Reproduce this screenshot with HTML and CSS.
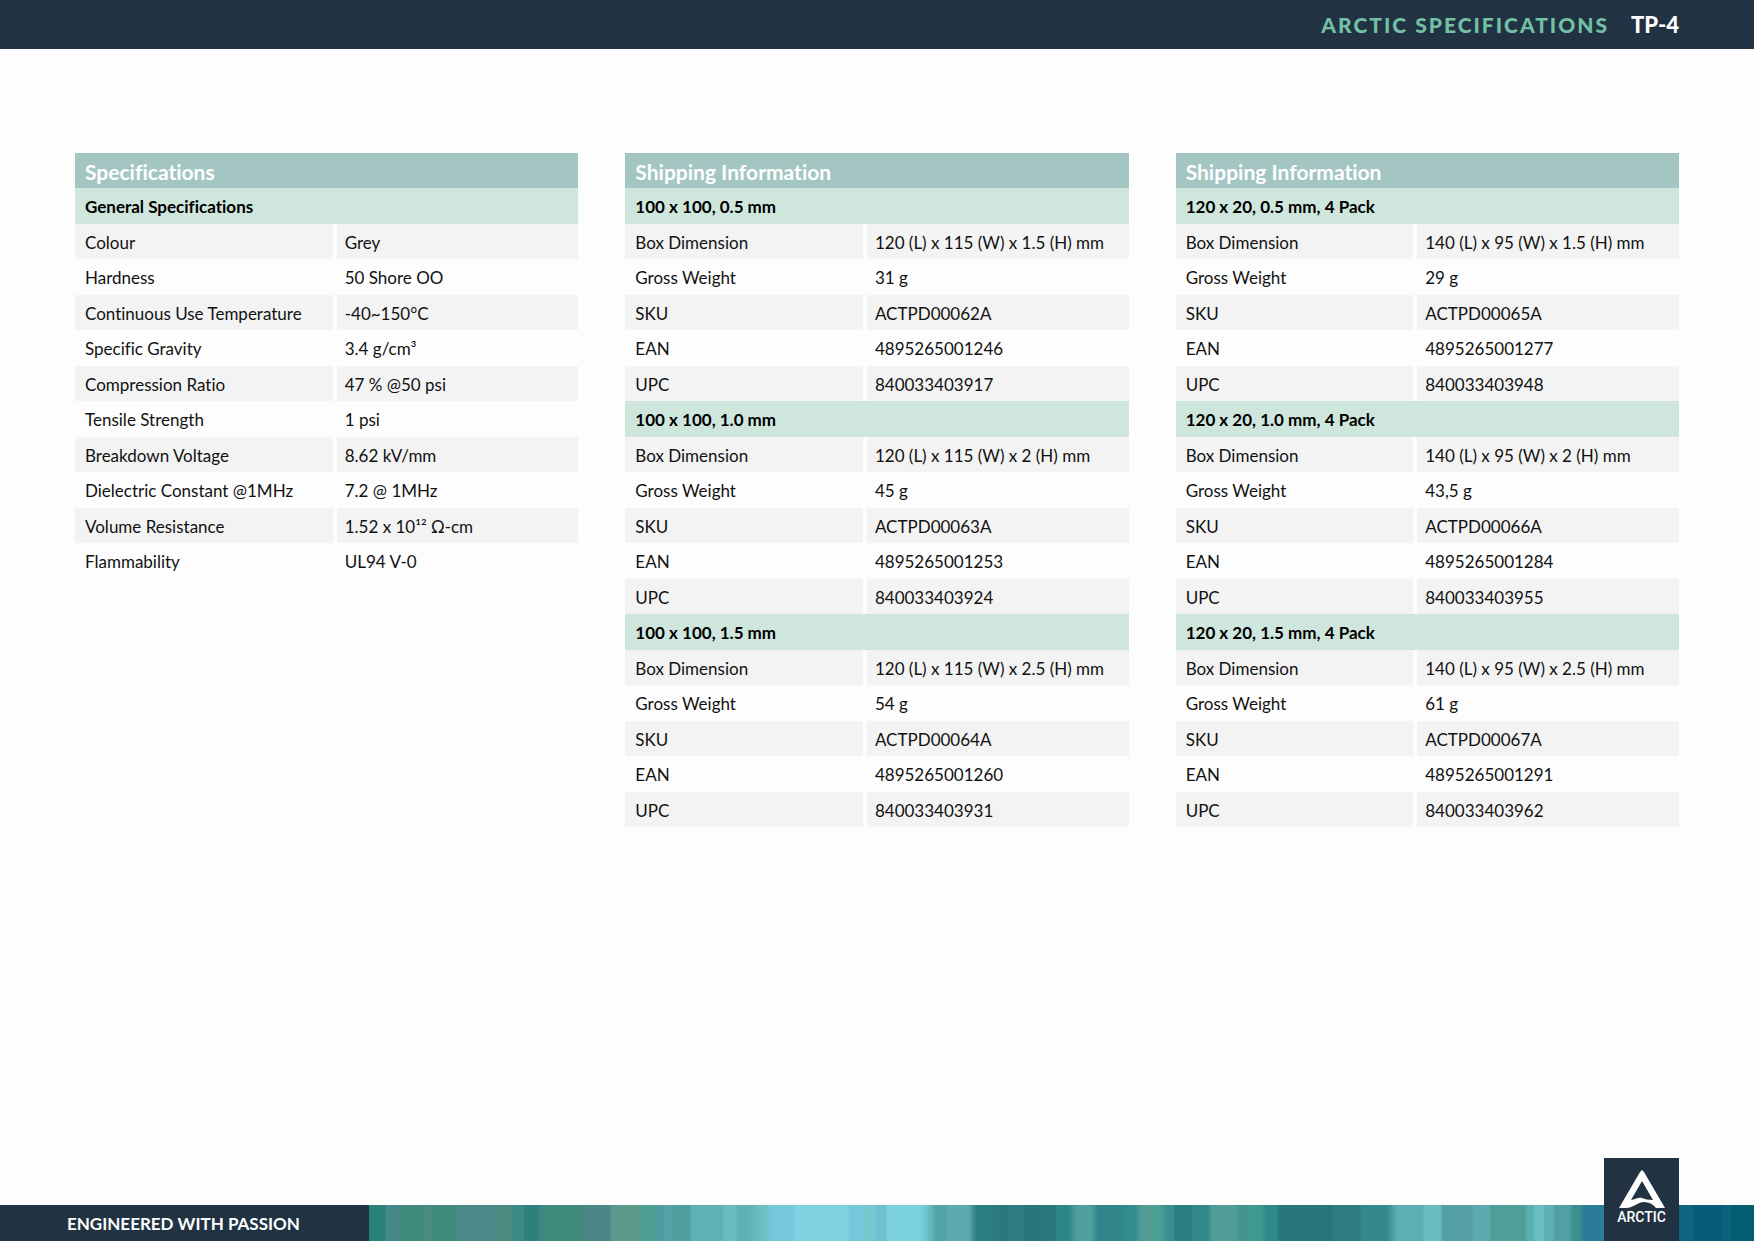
FILE: index.html
```html
<!DOCTYPE html>
<html lang="en">
<head>
    <meta charset="UTF-8">
    <meta name="viewport" content="width=device-width, initial-scale=1.0">
    <title>ARCTIC Specifications TP-4</title>
    <link rel="stylesheet" href="styles.css">
</head>
<body>
    <header class="top-bar">
        <span class="top-title">ARCTIC SPECIFICATIONS</span>
        <h1 class="product">TP-4</h1>
    </header>
    <main class="columns">
        <table class="specs">
            <colgroup><col class="label"><col></colgroup>
            <thead>
                <tr><th colspan="2">Specifications</th></tr>
            </thead>
            <tbody>
                <tr class="group"><th colspan="2">General Specifications</th></tr>
                <tr class="grey"><th>Colour</th><td>Grey</td></tr>
                <tr><th>Hardness</th><td>50 Shore OO</td></tr>
                <tr class="grey"><th>Continuous Use Temperature</th><td>-40~150°C</td></tr>
                <tr><th>Specific Gravity</th><td>3.4 g/cm³</td></tr>
                <tr class="grey"><th>Compression Ratio</th><td>47 % @50 psi</td></tr>
                <tr><th>Tensile Strength</th><td>1 psi</td></tr>
                <tr class="grey"><th>Breakdown Voltage</th><td>8.62 kV/mm</td></tr>
                <tr><th>Dielectric Constant @1MHz</th><td>7.2 @ 1MHz</td></tr>
                <tr class="grey"><th>Volume Resistance</th><td>1.52 x 10¹² Ω-cm</td></tr>
                <tr><th>Flammability</th><td>UL94 V-0</td></tr>
            </tbody>
        </table>
        <table class="shipping">
            <colgroup><col class="label"><col></colgroup>
            <thead>
                <tr><th colspan="2">Shipping Information</th></tr>
            </thead>
            <tbody>
                <tr class="group"><th colspan="2">100 x 100, 0.5 mm</th></tr>
                <tr class="grey"><th>Box Dimension</th><td>120 (L) x 115 (W) x 1.5 (H) mm</td></tr>
                <tr><th>Gross Weight</th><td>31 g</td></tr>
                <tr class="grey"><th>SKU</th><td>ACTPD00062A</td></tr>
                <tr><th>EAN</th><td>4895265001246</td></tr>
                <tr class="grey"><th>UPC</th><td>840033403917</td></tr>
            </tbody>
            <tbody>
                <tr class="group"><th colspan="2">100 x 100, 1.0 mm</th></tr>
                <tr class="grey"><th>Box Dimension</th><td>120 (L) x 115 (W) x 2 (H) mm</td></tr>
                <tr><th>Gross Weight</th><td>45 g</td></tr>
                <tr class="grey"><th>SKU</th><td>ACTPD00063A</td></tr>
                <tr><th>EAN</th><td>4895265001253</td></tr>
                <tr class="grey"><th>UPC</th><td>840033403924</td></tr>
            </tbody>
            <tbody>
                <tr class="group"><th colspan="2">100 x 100, 1.5 mm</th></tr>
                <tr class="grey"><th>Box Dimension</th><td>120 (L) x 115 (W) x 2.5 (H) mm</td></tr>
                <tr><th>Gross Weight</th><td>54 g</td></tr>
                <tr class="grey"><th>SKU</th><td>ACTPD00064A</td></tr>
                <tr><th>EAN</th><td>4895265001260</td></tr>
                <tr class="grey"><th>UPC</th><td>840033403931</td></tr>
            </tbody>
        </table>
        <table class="shipping">
            <colgroup><col class="label"><col></colgroup>
            <thead>
                <tr><th colspan="2">Shipping Information</th></tr>
            </thead>
            <tbody>
                <tr class="group"><th colspan="2">120 x 20, 0.5 mm, 4 Pack</th></tr>
                <tr class="grey"><th>Box Dimension</th><td>140 (L) x 95 (W) x 1.5 (H) mm</td></tr>
                <tr><th>Gross Weight</th><td>29 g</td></tr>
                <tr class="grey"><th>SKU</th><td>ACTPD00065A</td></tr>
                <tr><th>EAN</th><td>4895265001277</td></tr>
                <tr class="grey"><th>UPC</th><td>840033403948</td></tr>
            </tbody>
            <tbody>
                <tr class="group"><th colspan="2">120 x 20, 1.0 mm, 4 Pack</th></tr>
                <tr class="grey"><th>Box Dimension</th><td>140 (L) x 95 (W) x 2 (H) mm</td></tr>
                <tr><th>Gross Weight</th><td>43,5 g</td></tr>
                <tr class="grey"><th>SKU</th><td>ACTPD00066A</td></tr>
                <tr><th>EAN</th><td>4895265001284</td></tr>
                <tr class="grey"><th>UPC</th><td>840033403955</td></tr>
            </tbody>
            <tbody>
                <tr class="group"><th colspan="2">120 x 20, 1.5 mm, 4 Pack</th></tr>
                <tr class="grey"><th>Box Dimension</th><td>140 (L) x 95 (W) x 2.5 (H) mm</td></tr>
                <tr><th>Gross Weight</th><td>61 g</td></tr>
                <tr class="grey"><th>SKU</th><td>ACTPD00067A</td></tr>
                <tr><th>EAN</th><td>4895265001291</td></tr>
                <tr class="grey"><th>UPC</th><td>840033403962</td></tr>
            </tbody>
        </table>
    </main>
    <footer class="bottom-bar">
        <div class="slogan">ENGINEERED WITH PASSION</div>
        <div class="stripes"></div>
        <div class="logo">
            <svg width="46" height="38" viewBox="0 0 46 38" aria-hidden="true">
                <path fill="#fff" d="M23 0L25 2L46 38H37C34 34 30 32 25 32C18 32 15 38 7 38H0L21 2ZM23 11L12 30C16 30 19 27 23 28C26 29 29 30 34 30Z"/>
            </svg>
            <span>ARCTIC</span>
        </div>
    </footer>
</body>
</html>
```
FILE: styles.css
```css
* {
    box-sizing: border-box;
}
body {
    margin: 0;
    min-height: 100vh;
    display: flex;
    flex-direction: column;
    background: #fdfdfd;
    color: #111;
    font-family: Lato, "Liberation Sans", sans-serif;
    font-size: 17px;
    font-variant-ligatures: none;
}
.top-bar {
    display: flex;
    justify-content: flex-end;
    align-items: center;
    gap: 22px;
    height: 49px;
    padding: 0 75px;
    background: #213343;
    font-size: 21px;
    font-weight: 900;
}
.top-title {
    color: #73c0a5;
    letter-spacing: 2px;
}
.product {
    margin: 0;
    color: #fff;
    font-size: 22px;
    font-weight: 900;
}
.columns {
    flex: 1;
    display: grid;
    grid-template-columns: repeat(3, 1fr);
    align-items: start;
    gap: 47px;
    padding: 104px 75px 80px;
}
table {
    width: 100%;
    table-layout: fixed;
    border-collapse: separate;
    border-spacing: 0;
}
.specs .label {
    width: 52%;
}
.shipping .label {
    width: 48%;
}
th, td {
    height: 36px;
    padding: 2px 0 0 10px;
    text-align: left;
    font-weight: 400;
    line-height: 24px;
    white-space: nowrap;
}
td {
    padding-left: 8px;
}
thead th {
    height: 35px;
    background: #a4c6c3;
    color: #fff;
    font-size: 21px;
    font-weight: 700;
}
.group th {
    background: #cfe6dd;
    color: #000;
    font-weight: 700;
}
.grey th, .grey td {
    height: 35px;
    background: #f3f3f3;
}
/* White gap between label and value */
.grey th {
    border-right: 4px solid #fdfdfd;
}
.bottom-bar {
    position: relative;
    display: flex;
    height: 36px;
    background: #213343;
}
.slogan {
    width: 369px;
    padding-left: 67px;
    color: #fff;
    font-weight: 700;
    line-height: 37px;
}
.stripes {
    flex: 1;
    background: linear-gradient(90deg,
        #2a8278 0 16px, #46888a 17px 31px, #3f8a78 32px 54px, #4b8a7d 55px 62px,
        #3f8a78 63px 86px, #4a8987 87px 128px, #4a8a80 129px 143px, #3a8a85 145px 154px,
        #2f7f7a 156px 169px, #3f8688 170px 174px, #3e8b79 176px 210px, #4b8786 216px 241px,
        #5b9a8a 243px 271px, #4c9f95 272px 286px, #4e9ba0 287px 294px, #56a0aa 295px 303px,
        #4f9e9b 304px 320px, #5eb1b5 323px 353px, #69bcbf 355px 366px, #5fb2b4 370px 378px,
        #72c5c8 399px, #75c7da 401px 423px, #7fd3e0 427px 479px, #75c8da 480px 494px,
        #74c9cc 495px 506px, #6fc0d0 508px 516px, #7dd2e2 519px 551px, #5fb2b2 564px,
        #4fa5a5 567px 576px, #5fa9b0 578px 600px, #3f9094 604px, #2a8080 608px 623px,
        #2b787e 625px 639px, #307d85 640px 654px, #27747a 656px 671px, #2b787e 672px 686px,
        #2e8688 688px 700px, #50a09f 708px 722px, #2f8589 729px 751px, #338d90 760px 766px,
        #519b93 772px 783px, #489f93 785px 793px, #3a8f90 797px 804px, #2a8080 806px 823px,
        #33888d 824px 839px, #509d98 843px 868px, #45948d 870px 879px, #409a8f 881px 892px,
        #2f8a8c 897px 907px, #26757a 911px 961px, #2c7c80 964px 989px, #33898e 993px 1018px,
        #5cb0b5 1028px 1054px, #69bdc0 1055px 1072px, #54a0a6 1073px 1103px, #5faab2 1104px 1120px,
        #4f9e97 1122px 1155px, #5bb0b2 1159px 1164px, #69bfc3 1166px 1174px, #5fb0b5 1176px 1184px,
        #52a0a5 1186px 1200px, #3a9090 1204px 1211px, #2b7c98 1215px 1240px, #12637f 1300px 1324px,
        #065a7a 1325px 1353px, #0a6280 1354px 1361px, #045c72 1363px);
}
.logo {
    position: absolute;
    right: 75px;
    bottom: 0;
    width: 75px;
    height: 83px;
    padding-top: 12px;
    display: flex;
    flex-direction: column;
    align-items: center;
    background: #213343;
    color: #fff;
    font-family: Roboto, "Liberation Sans", sans-serif;
    font-size: 14px;
    font-weight: 500;
    line-height: 18px;
}
```
